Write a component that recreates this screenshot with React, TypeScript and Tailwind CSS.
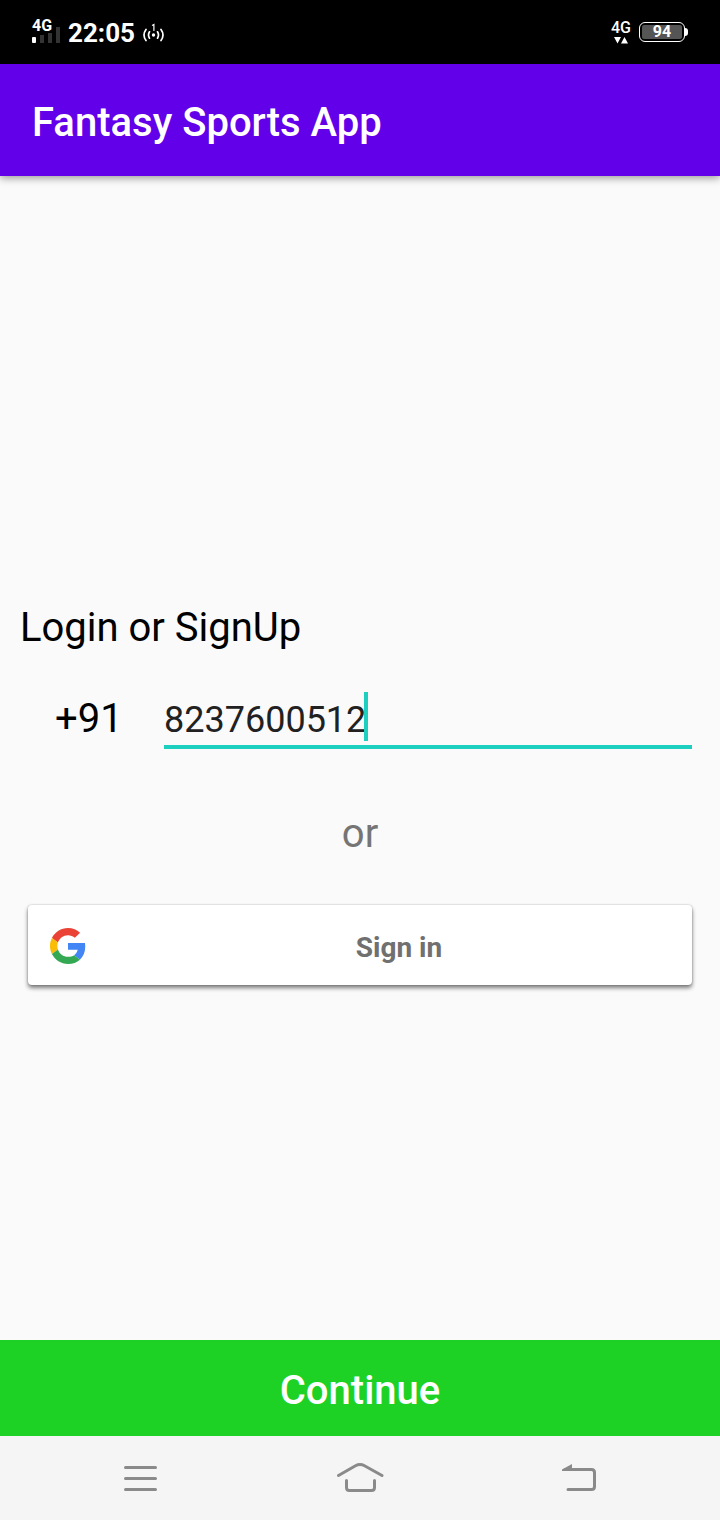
import { useState } from "react";

function StatusBar() {
  return (
    <div className="flex h-16 items-center justify-between bg-black px-8 font-bold text-white">
      <div className="flex items-center gap-2">
        <div className="flex w-7 flex-col">
          <span className="text-[16px] leading-5">4G</span>
          <svg className="h-3 w-7 overflow-visible" viewBox="0 0 28 12" aria-hidden="true">
            <rect x="0" y="1" width="4" height="6" rx="1" fill="#fff" />
            <rect x="8" y="-1" width="4" height="8" fill="#333" />
            <rect x="16" y="-3" width="4" height="10" fill="#333" />
            <rect x="24" y="-9" width="4" height="16" fill="#333" />
          </svg>
        </div>
        <span className="pt-0.5 text-[26px] leading-8">22:05</span>
        <svg
          className="h-6 w-6"
          viewBox="1 -2 24 24"
          fill="none"
          stroke="#fff"
          strokeWidth="1.7"
          strokeLinecap="round"
          aria-hidden="true"
        >
          <circle cx="11.5" cy="13" r="1.7" fill="#fff" stroke="none" />
          <path d="M7.500 9.800q-2 3.200 0 6.400M15.500 9.800q2 3.200 0 6.400M4 7.500q-4 5.500 0 11M19 7.500q4 5.500 0 11" />
          <path d="M10.500 3.300l1.400-.8v6" strokeWidth="1.200" />
        </svg>
      </div>
      <div className="flex items-center gap-2">
        <div className="flex flex-col items-center">
          <span className="text-[16px] leading-4 font-medium">4G</span>
          <svg className="h-2 w-4" viewBox="0 0 16 8" fill="#fff" aria-hidden="true">
            <path d="M1 1h7L4.500 7.500zM8 7.500h7L11.500 1z" />
          </svg>
        </div>
        <div className="flex items-center">
          <div className="flex h-5 w-[46px] rounded-md border border-white p-0.5">
            <span className="flex-1 rounded-xs bg-[#555] text-center text-[16px] leading-[14px]">94</span>
          </div>
          <span className="h-2 w-[3px] rounded-r-sm bg-white" />
        </div>
      </div>
    </div>
  );
}

function GoogleLogo() {
  return (
    <svg className="h-9 w-9 shrink-0" viewBox="0 0 48 48" aria-hidden="true">
      <path
        fill="#ea4335"
        d="M24 9.500c3.540 0 6.710 1.220 9.210 3.600l6.850-6.850C35.900 2.380 30.470 0 24 0 14.620 0 6.510 5.380 2.560 13.220l7.980 6.190C12.430 13.720 17.740 9.500 24 9.500z"
      />
      <path
        fill="#4285f4"
        d="M46.980 24.550c0-1.570-.15-3.090-.38-4.550H24v9.020h12.940c-.58 2.960-2.260 5.480-4.780 7.180l7.730 6c4.510-4.180 7.090-10.360 7.090-17.650z"
      />
      <path
        fill="#fbbc05"
        d="M10.530 28.590c-.48-1.450-.76-2.990-.76-4.590s.27-3.140.76-4.590l-7.980-6.190C.92 16.460 0 20.120 0 24c0 3.880.92 7.540 2.560 10.780l7.970-6.190z"
      />
      <path
        fill="#34a853"
        d="M24 48c6.480 0 11.930-2.130 15.890-5.810l-7.730-6c-2.150 1.450-4.920 2.300-8.160 2.300-6.260 0-11.570-4.220-13.470-9.910l-7.980 6.190C6.510 42.620 14.620 48 24 48z"
      />
    </svg>
  );
}

function PhoneField() {
  const [phone, setPhone] = useState("8237600512");
  return (
    <div className="flex items-baseline pl-[35px] pr-2">
      <label htmlFor="phone" className="w-[109px] text-[40px] leading-[50px] text-black">
        +91
      </label>
      <div className="flex flex-1 items-start border-b-4 border-[#1ccfbf]">
        <input
          id="phone"
          type="tel"
          value={phone}
          onChange={(e) => setPhone(e.target.value)}
          className="field-sizing-content h-[53px] bg-transparent pt-0.5 text-[36px] leading-[51px] text-[#212121] caret-transparent outline-none"
        />
        <span className="-ml-0.5 h-[49px] w-1 bg-[#1ccfbf]" />
      </div>
    </div>
  );
}

function NavigationBar() {
  const button = "flex h-full flex-1 items-center justify-center";
  return (
    <nav className="flex h-[84px] bg-[#f5f5f5] px-8 text-[#8a8a8a]">
      <button type="button" aria-label="Recent apps" className={button}>
        <svg className="h-10 w-12" viewBox="0 0 48 40" fill="none" stroke="currentColor" strokeWidth="3" strokeLinecap="round">
          <path d="M8.500 9.500h30M8.500 20.500h30M8.500 31.500h30" />
        </svg>
      </button>
      <button type="button" aria-label="Home" className={button}>
        <svg className="h-10 w-12" viewBox="0 0 48 40" fill="none" stroke="currentColor" strokeWidth="3" strokeLinecap="round">
          <path d="M2.500 17.500L19.500 7.700q4.500-2.400 9 0L46 17.500" />
          <path d="M10.500 22.500v7q0 3 3 3h22q3 0 3-3v-7" />
        </svg>
      </button>
      <button type="button" aria-label="Back" className={button}>
        <svg className="h-10 w-12" viewBox="0 0 48 40" fill="none" stroke="currentColor" strokeWidth="3" strokeLinecap="round">
          <path d="M10 11.500h26.500q3 0 3 3v14q0 3-3 3h-23.500" />
          <path d="M7 13v-1.500L17 6v7z" fill="currentColor" stroke="none" />
        </svg>
      </button>
    </nav>
  );
}

export default function App() {
  return (
    <div className="flex min-h-screen flex-col bg-[#fafafa] font-[Roboto,sans-serif]">
      <StatusBar />
      <header className="flex h-28 items-center bg-[#6200ea] px-8 pt-1.5 shadow-[0_2px_8px_rgba(0,0,0,0.4)]">
        <h1 className="text-[40px] leading-[50px] font-medium text-white">Fantasy Sports App</h1>
      </header>
      <main className="flex flex-1 flex-col justify-center px-5 pt-[72px]">
        <h2 className="mb-[39px] text-[40px] leading-[50px] text-black">Login or SignUp</h2>
        <PhoneField />
        <p className="mt-[60px] mb-[46px] text-center text-[40px] leading-[50px] text-[#757575]">or</p>
        <button
          type="button"
          className="mx-2 flex h-20 items-center gap-5 rounded-sm bg-white pt-0.5 pl-[22px] shadow-[0_3px_4px_rgba(0,0,0,0.5),0_0_2px_rgba(0,0,0,0.25)]"
        >
          <GoogleLogo />
          <span className="flex-1 pt-1 text-center text-[28px] leading-8 font-bold text-[#707070]">Sign in</span>
        </button>
      </main>
      <button
        type="button"
        className="h-24 bg-[#1dd224] pt-1.5 text-center text-[40px] leading-[50px] font-medium text-white"
      >
        Continue
      </button>
      <NavigationBar />
    </div>
  );
}
